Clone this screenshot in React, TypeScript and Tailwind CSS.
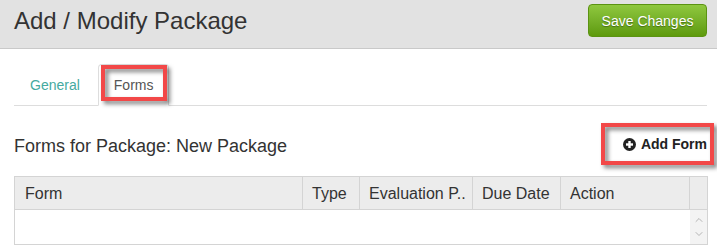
import { ChevronUp, ChevronDown } from 'lucide-react'

const font = { fontFamily: '"Liberation Sans", Arial, sans-serif' }

function Callout({ className }: { className: string }) {
  return (
    <div
      className={`pointer-events-none absolute border-[4px] border-[#f24848] [filter:drop-shadow(3px_3px_2px_rgba(0,0,0,0.5))] ${className}`}
    />
  )
}

function PlusCircle() {
  return (
    <svg width="13" height="13" viewBox="0 0 13 13" className="shrink-0">
      <circle cx="6.5" cy="6.5" r="6.5" fill="#222" />
      <rect x="3" y="5.3" width="7" height="2.4" fill="#fff" />
      <rect x="5.3" y="3" width="2.4" height="7" fill="#fff" />
    </svg>
  )
}

const columns = [
  { label: 'Form', w: 'w-[288px]' },
  { label: 'Type', w: 'w-[57px]' },
  { label: 'Evaluation P..', w: 'w-[113px]' },
  { label: 'Due Date', w: 'w-[88px]' },
  { label: 'Action', w: 'w-[129px]' },
]

export default function App() {
  return (
    <div style={font} className="w-[717px] h-[251px] bg-white overflow-hidden text-[#333]">
      {/* page header */}
      <div className="h-[49px] bg-[#e2e2e2] border-b border-[#c9c9c9] flex items-start justify-between pl-[14px] pr-[10px]">
        <h1 className="pt-[7px] text-[24px] leading-[28px] text-[#333]">Add / Modify Package</h1>
        <button className="mt-[4px] h-[33px] w-[119px] rounded-[4px] border border-[#5b9312] bg-gradient-to-b from-[#8fc83e] to-[#5e9a0b] text-[14px] text-white pt-[1px] [text-shadow:0_1px_1px_rgba(0,0,0,0.35)]">
          Save Changes
        </button>
      </div>

      <div className="pl-[14px] pr-[9px]">
        {/* tabs */}
        <div className="mt-[15px] mr-[1px] flex border-b border-[#dddddd] text-[14px] leading-[20px]">
          <a className="-mb-px mr-[2px] border border-transparent px-[15px] py-[10px] text-[#45aaa0]">General</a>
          <div className="relative -mb-px rounded-t-[4px] border border-[#dddddd] border-b-white bg-white px-[15px] py-[10px] text-[#555]">
            Forms
            <Callout className="left-[2px] top-0 w-[66px] h-[36px]" />
          </div>
        </div>

        {/* section heading */}
        <div className="mt-[17px] flex h-[42px] items-center justify-between">
          <h2 className="mt-[3px] text-[18px] leading-[20px] text-[#333]">Forms for Package: New Package</h2>
          <div className="relative flex h-[42px] items-center gap-[5px] pr-[1px]">
            <PlusCircle />
            <span className="text-[14px] font-bold leading-[20px] text-[#222]">Add Form</span>
            <Callout className="-left-[22px] -right-[6px] top-0 bottom-0" />
          </div>
        </div>

        {/* grid */}
        <div className="mt-[11px] border border-[#d4d4d4] text-[16px]">
          <div className="flex h-[33px] border-b border-[#d4d4d4] bg-[#ececec]">
            {columns.map((c, i) => (
              <div
                key={c.label}
                className={`${c.w} ${i === 0 ? 'pl-[10px]' : 'pl-[9px]'} shrink-0 overflow-hidden whitespace-nowrap border-r border-[#d4d4d4] pt-[7px] leading-[20px] text-[#333]`}
              >
                {c.label}
              </div>
            ))}
            <div className="flex-1" />
          </div>
          <div className="flex h-[34px]">
            <div className="flex-1" />
            <div className="flex w-[17px] flex-col items-center justify-between bg-[#f3f3f3] py-[4px] text-[#b5b5b5]">
              <ChevronUp size={12} strokeWidth={2} />
              <ChevronDown size={12} strokeWidth={2} />
            </div>
          </div>
        </div>
      </div>
    </div>
  )
}
